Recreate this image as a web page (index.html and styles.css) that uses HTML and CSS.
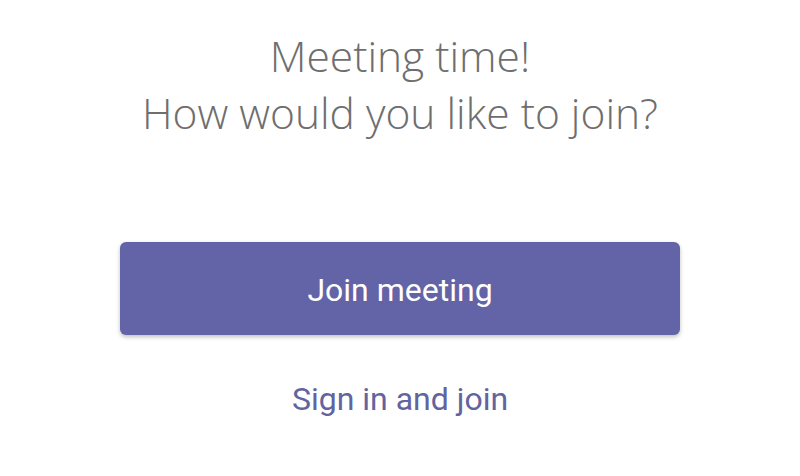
FILE: index.html
```html
<!DOCTYPE html>
<html lang="en">
<head>
    <meta charset="UTF-8">
    <meta name="viewport" content="width=device-width, initial-scale=1.0">
    <title>Join meeting</title>
    <link rel="stylesheet" href="styles.css">
</head>
<body>
    <div class="join">
        <h1 class="title">Meeting time!<br>How would you like to join?</h1>
        <button class="join-button">Join meeting</button>
        <a class="sign-in" href="#">Sign in and join</a>
    </div>
</body>
</html>
```

FILE: styles.css
```css
body {
    margin: 0;
    padding: 0;
    background: #ffffff;
    font-family: Roboto, "Liberation Sans", sans-serif;
}

.join {
    display: flex;
    flex-direction: column;
    align-items: center;
    padding-top: 27px;
}

.title {
    margin: 0;
    font-family: "Open Sans", "Liberation Sans", sans-serif;
    font-weight: 300;
    font-size: 42.5px;
    line-height: 57px;
    color: #6e6e6e;
    text-align: center;
}

.join-button {
    margin-top: 101px;
    width: 560px;
    height: 93px;
    padding: 3px 0 0;
    border: none;
    border-radius: 6px;
    background: #6264a7;
    color: #ffffff;
    font-family: Roboto, "Liberation Sans", sans-serif;
    font-size: 32px;
    box-shadow: 0 2px 4px rgba(0, 0, 0, 0.25);
    cursor: pointer;
}

.sign-in {
    margin-top: 45px;
    font-size: 32px;
    color: #62649f;
    text-decoration: none;
}
```
